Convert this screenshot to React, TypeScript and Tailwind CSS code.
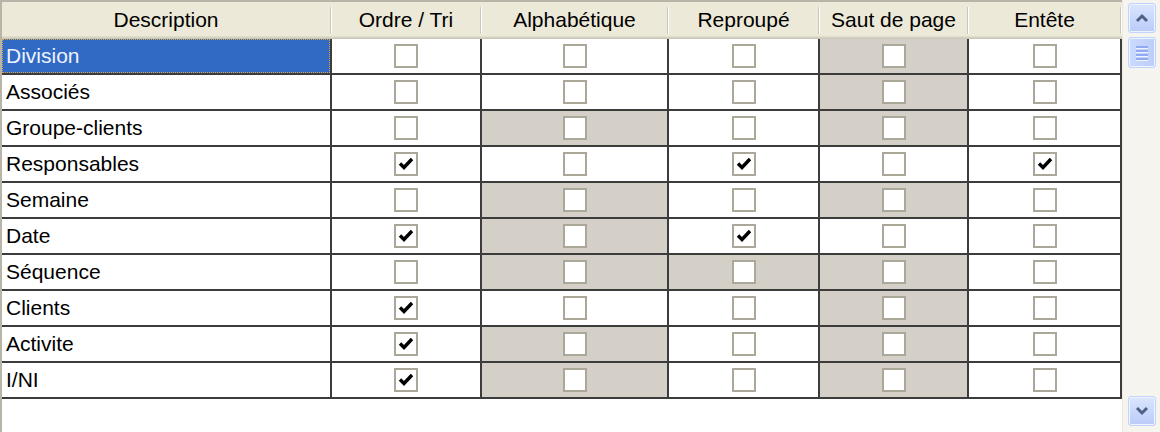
import React from "react";

type Cell = { on: boolean; off: boolean };

const headers = ["Description", "Ordre / Tri", "Alphabétique", "Reproupé", "Saut de page", "Entête"];

// c = checked, g = greyed (disabled), . = plain
const rows: { name: string; cells: string[] }[] = [
  { name: "Division", cells: [".", ".", ".", "g", "."] },
  { name: "Associés", cells: [".", ".", ".", "g", "."] },
  { name: "Groupe-clients", cells: [".", "g", ".", "g", "."] },
  { name: "Responsables", cells: ["c", ".", "c", ".", "c"] },
  { name: "Semaine", cells: [".", "g", ".", "g", "."] },
  { name: "Date", cells: ["c", "g", "c", ".", "."] },
  { name: "Séquence", cells: [".", "g", "g", "g", "."] },
  { name: "Clients", cells: ["c", ".", ".", "g", "."] },
  { name: "Activite", cells: ["c", "g", ".", "g", "."] },
  { name: "I/NI", cells: ["c", "g", ".", "g", "."] },
];

const gridCols = "grid grid-cols-[330px_150px_187px_151px_149px_153px]";

function CheckBox({ on }: { on: boolean }) {
  return (
    <div className="flex h-6 w-6 items-center justify-center border-2 border-[#aca899] bg-white">
      {on && (
        <svg width="16" height="14" viewBox="0 0 16 14">
          <polyline points="2,6.5 6,10.5 14,2" fill="none" stroke="#000" strokeWidth="3.4" strokeLinejoin="miter" />
        </svg>
      )}
    </div>
  );
}

function Chevron({ up }: { up: boolean }) {
  return (
    <svg width="14" height="10" viewBox="0 0 14 10">
      <polyline
        points={up ? "2,8 7,3 12,8" : "2,2 7,7 12,2"}
        fill="none"
        stroke="#4d6185"
        strokeWidth="3"
      />
    </svg>
  );
}

function ScrollButton({ up }: { up: boolean }) {
  return (
    <div className="flex h-[30px] w-[28px] items-center justify-center rounded-[3px] border border-[#c3d3fd] bg-gradient-to-b from-[#dbe5fe] to-[#b9cbf8] shadow-[inset_0_0_0_1px_#eef3ff]">
      <Chevron up={up} />
    </div>
  );
}

export default function App() {
  return (
    <div className="flex h-[432px] w-[1160px] bg-white font-['Liberation_Sans',Arial,sans-serif] text-[21px] text-black">
      {/* grid */}
      <div className="flex w-[1122px] flex-col border-t-2 border-l-2 border-[#b8b5a8]">
        <div className={`${gridCols} h-[37px] bg-[#ece9d8] shadow-[inset_0_-1px_0_#cbc7b8,inset_0_-2px_0_#d6d2c2,inset_0_-3px_0_#e2decd]`}>
          {headers.map((h) => (
            <div key={h} className="flex items-stretch">
              <div className="flex flex-1 items-center justify-center pb-[2px]">{h}</div>
              <div className="my-[5px] flex">
                <div className="w-px bg-[#cbc7b8]" />
                <div className="w-px bg-white" />
              </div>
            </div>
          ))}
        </div>
        {rows.map((r, i) => (
          <div key={r.name} className={`${gridCols} h-[36px]`}>
            <div className="flex border-r-2 border-b-2 border-[#3c3c3c]">
              {i === 0 ? (
                <div className="flex flex-1 items-center bg-[#316ac5] pl-[4px] text-[#eef3ff] outline-1 -outline-offset-1 outline-[#d9a441] outline-dotted">
                  {r.name}
                </div>
              ) : (
                <div className="flex flex-1 items-center pl-[4px]">{r.name}</div>
              )}
            </div>
            {r.cells.map((c, j) => (
              <div
                key={j}
                className={`flex items-center justify-center border-r-2 border-b-2 border-[#3c3c3c] ${c === "g" ? "bg-[#d4d0c8]" : "bg-white"}`}
              >
                <CheckBox on={c === "c"} />
              </div>
            ))}
          </div>
        ))}
      </div>
      {/* scrollbar */}
      <div className="flex w-[38px] flex-col items-center border-l border-[#ebe9df] bg-[#f5f4ee] pt-[3px] pb-[6px]">
        <ScrollButton up />
        <div className="mt-[4px] flex h-[31px] w-[28px] flex-col items-center justify-center gap-[2px] rounded-[3px] border border-[#c3d3fd] bg-gradient-to-r from-[#cbdafd] to-[#bccdf9] shadow-[inset_0_0_0_1px_#eef3ff]">
          {[0, 1, 2, 3].map((k) => (
            <div key={k} className="h-[2px] w-[12px] bg-[#8faaf0] shadow-[0_1px_0_#eef3ff]" />
          ))}
        </div>
        <div className="flex-1" />
        <ScrollButton up={false} />
      </div>
    </div>
  );
}
